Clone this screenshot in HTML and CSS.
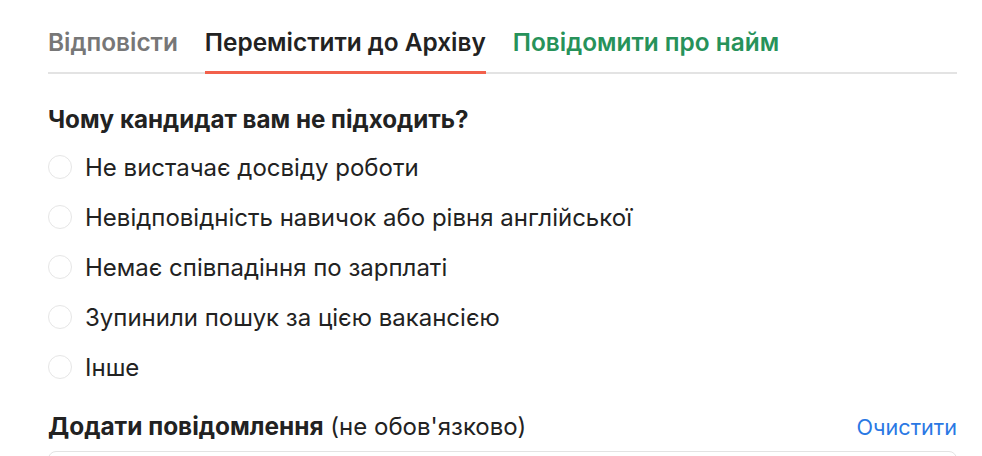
FILE: index.html
```html
<!doctype html>
<html lang="uk">
<head>
    <meta charset="UTF-8">
    <title>Архів</title>
    <link rel="stylesheet" href="styles.css">
</head>
<body>
<div class="panel">
    <div class="tabs">
        <span class="tab">Відповісти</span>
        <span class="tab tab-active">Перемістити до Архіву</span>
        <span class="tab tab-green">Повідомити про найм</span>
    </div>

    <div class="question">Чому кандидат вам не підходить?</div>

    <div class="options">
        <label class="option"><span class="radio"></span>Не вистачає досвіду роботи</label>
        <label class="option"><span class="radio"></span>Невідповідність навичок або рівня англійської</label>
        <label class="option"><span class="radio"></span>Немає співпадіння по зарплаті</label>
        <label class="option"><span class="radio"></span>Зупинили пошук за цією вакансією</label>
        <label class="option"><span class="radio"></span>Інше</label>
    </div>

    <div class="message-head">
        <span><b>Додати повідомлення</b> (не обов'язково)</span>
        <span class="clear-link">Очистити</span>
    </div>
    <div class="message-box"></div>
</div>
</body>
</html>
```

FILE: styles.css
```css
body {
    margin: 0;
    background: #fff;
    font-family: Inter, "Noto Sans", sans-serif;
    color: #222;
    overflow: hidden;
}

.panel {
    width: 909px;
    padding: 0 25px 0 48px;
}

.tabs {
    display: flex;
    gap: 27px;
    padding-top: 27px;
    border-bottom: 2px solid #e3e3e3;
}

.tab {
    font-size: 24.4px;
    line-height: 30px;
    font-weight: 600;
    color: #777;
    padding-bottom: 14px;
    margin-bottom: -2px;
    border-bottom: 3px solid transparent;
}

.tab-active {
    color: #222;
    border-bottom-color: #f2604b;
}

.tab-green {
    color: #27925a;
}

.question {
    margin-top: 31px;
    font-size: 24.2px;
    line-height: 30px;
    font-weight: 700;
}

.options {
    display: flex;
    flex-direction: column;
    margin-top: 7px;
}

.option {
    display: flex;
    align-items: center;
    height: 50px;
    font-size: 24px;
}

.radio {
    width: 22px;
    height: 22px;
    border: 1.5px solid #e6e6e6;
    border-radius: 50%;
    margin-right: 13px;
}

.message-head {
    display: flex;
    justify-content: space-between;
    align-items: baseline;
    margin-top: 19px;
    font-size: 24px;
    line-height: 30px;
}

.message-head b {
    font-size: 24.4px;
}

.clear-link {
    color: #2a78e4;
    font-size: 21.6px;
}

.message-box {
    margin-top: 9px;
    height: 80px;
    border: 1px solid #e3e3e3;
    border-radius: 8px;
}
```
